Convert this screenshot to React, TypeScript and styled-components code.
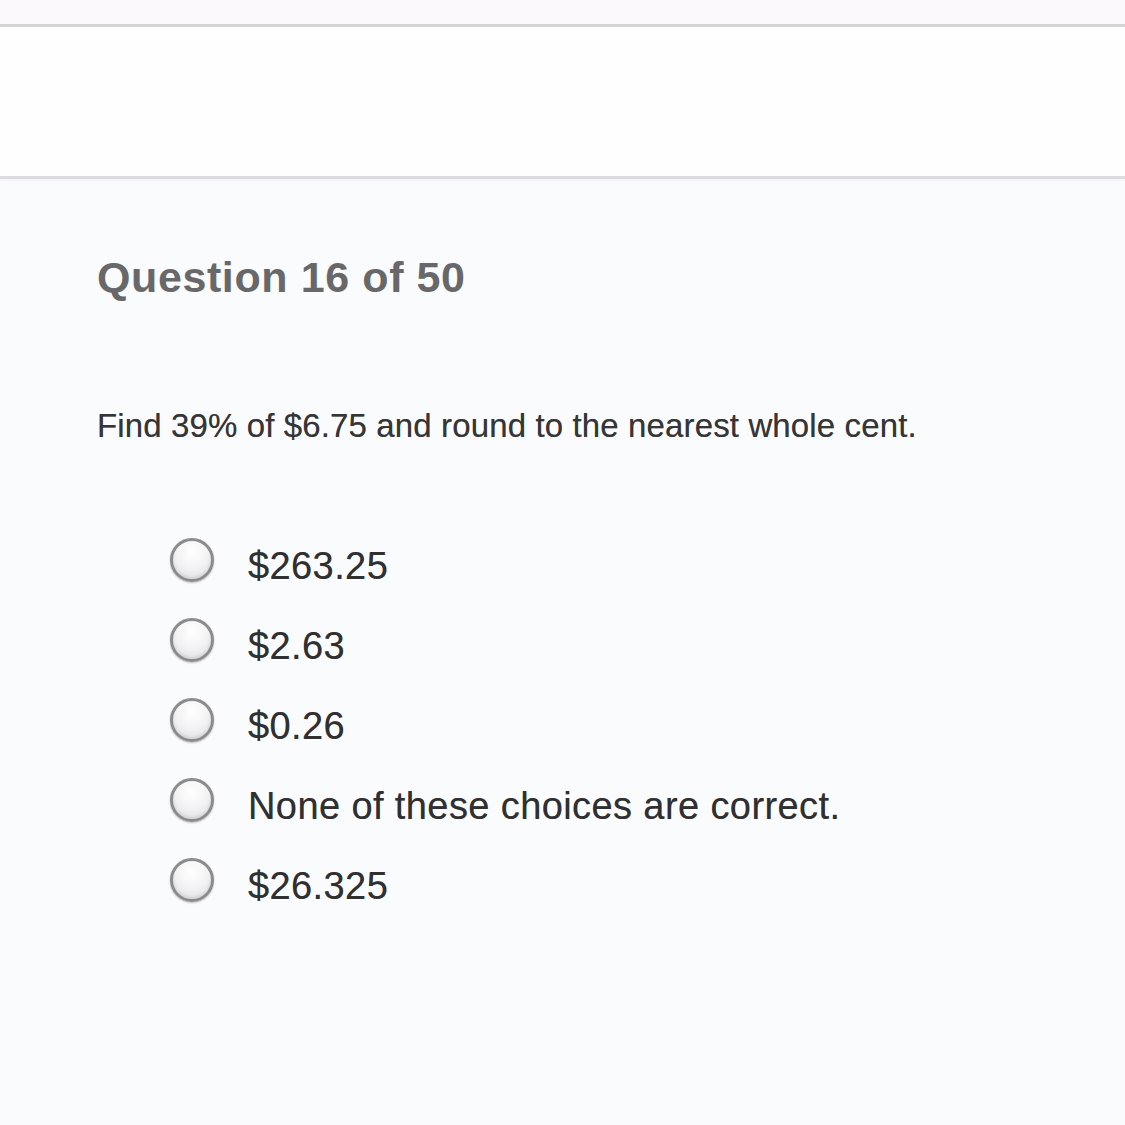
import React from "react";
import styled, { createGlobalStyle } from "styled-components";

const Global = createGlobalStyle`
  html, body { margin: 0; padding: 0; }
  body {
    background: #fafbfc;
    font-family: "Liberation Sans", Arial, sans-serif;
    min-height: 1125px;
  }
`;

const Page = styled.div`
  display: flex;
  flex-direction: column;
  min-height: 1125px;
  background: #fafbfc;
`;

const TopBand = styled.div`
  height: 24px;
  background: #fbf9fc;
  border-bottom: 3px solid #d6d3d8;
  box-shadow: 0 1px 1px #eeebf0;
`;

const Header = styled.div`
  height: 149px;
  background: #fefefe;
  border-bottom: 3px solid #dedbe0;
  box-shadow: 0 1px 2px #efedf1;
`;

const Main = styled.main`
  display: flex;
  flex-direction: column;
  padding-left: 97px;
`;

const Heading = styled.h1`
  margin: 77px 0 0;
  font-size: 43px;
  line-height: 43px;
  font-weight: 700;
  color: #68686a;
  letter-spacing: 0.6px;
`;

const Prompt = styled.p`
  margin: 110px 0 0;
  font-size: 33px;
  line-height: 33px;
  color: #363637;
  letter-spacing: 0.13px;
  text-shadow: 0 0 0.6px rgba(40, 40, 40, 0.6);
`;

const Options = styled.ul`
  list-style: none;
  margin: 84px 0 0;
  padding: 0 0 0 73px;
  display: flex;
  flex-direction: column;
`;

const Option = styled.li`
  height: 80px;
  display: flex;
  align-items: center;
  gap: 34px;
`;

const Radio = styled.span`
  box-sizing: border-box;
  width: 44px;
  height: 44px;
  margin-bottom: 12px;
  border-radius: 50%;
  border: 3px solid #8c8c8e;
  background: radial-gradient(circle at 50% 30%, #ffffff 0%, #f4f4f6 45%, #dcdcdf 100%);
  box-shadow: 0 1px 2px rgba(0, 0, 0, 0.25), inset 0 -2px 3px rgba(0, 0, 0, 0.08);
  flex: none;
`;

const Label = styled.span`
  font-size: 38px;
  line-height: 38px;
  color: #303031;
  letter-spacing: 0.4px;
  text-shadow: 0 0 0.6px rgba(40, 40, 40, 0.6);
`;

const choices = [
  "$263.25",
  "$2.63",
  "$0.26",
  "None of these choices are correct.",
  "$26.325",
];

export default function App() {
  return (
    <Page>
      <Global />
      <TopBand />
      <Header />
      <Main>
        <Heading>Question 16 of 50</Heading>
        <Prompt>Find 39% of $6.75 and round to the nearest whole cent.</Prompt>
        <Options>
          {choices.map((c) => (
            <Option key={c}>
              <Radio />
              <Label>{c}</Label>
            </Option>
          ))}
        </Options>
      </Main>
    </Page>
  );
}
